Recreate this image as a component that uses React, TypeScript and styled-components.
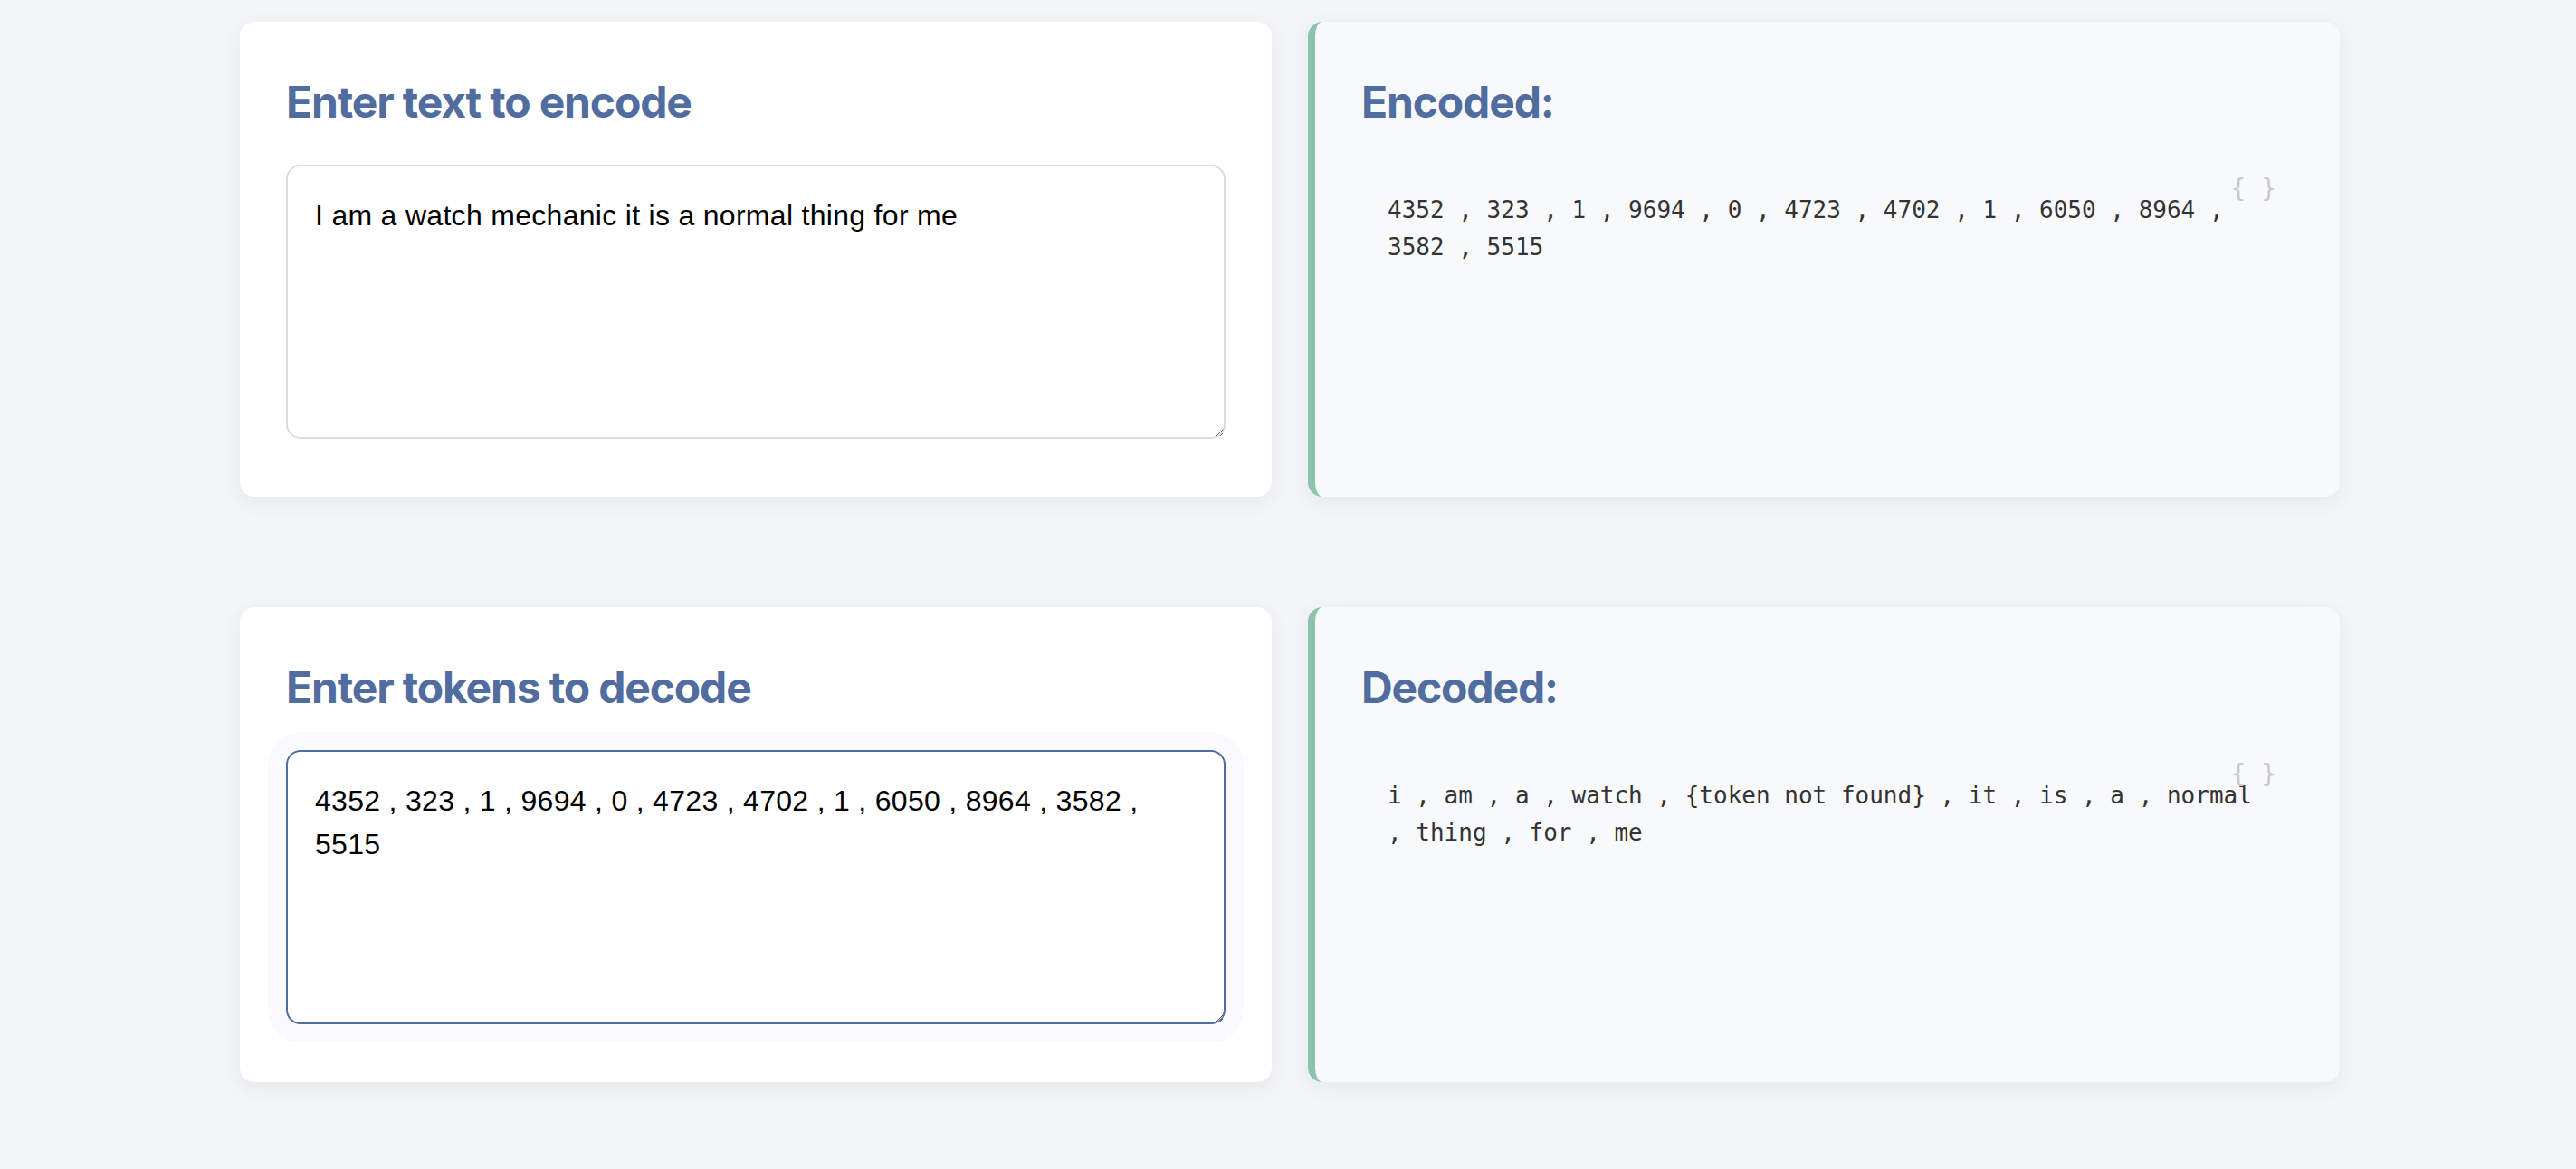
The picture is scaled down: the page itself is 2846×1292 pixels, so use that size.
import React, { useState } from "react";
import styled, { createGlobalStyle } from "styled-components";

const GlobalStyle = createGlobalStyle`
  html, body {
    margin: 0;
    padding: 0;
    background: #f4f5f8;
  }
  body {
    font-family: Inter, "Liberation Sans", Arial, sans-serif;
  }
  * { box-sizing: border-box; }
`;

const Page = styled.main`
  min-height: 1292px;
  padding: 24px 0 40px 4px;
`;

const Grid = styled.div`
  width: 2320px;
  margin: 0 auto;
  display: grid;
  grid-template-columns: 1140px 1140px;
  column-gap: 40px;
  row-gap: 122px;
`;

const Card = styled.section<{ $output?: boolean }>`
  position: relative;
  height: 525px;
  padding: 60px 51px 0 51px;
  border-radius: 16px;
  background: ${(p) => (p.$output ? "#f8f9fb" : "#ffffff")};
  border-left: ${(p) => (p.$output ? "8px solid #8bc4ab" : "none")};
  box-shadow: 0 6px 22px rgba(30, 40, 70, 0.07);
  display: flex;
  flex-direction: column;
`;

const Heading = styled.h2`
  margin: 0 0 40px;
  font-family: Inter, "Liberation Sans", sans-serif;
  font-weight: 700;
  font-size: 48px;
  line-height: 1.2;
  letter-spacing: -0.024em;
  color: #516c9f;
`;

const TextArea = styled.textarea<{ $focused?: boolean }>`
  display: block;
  width: 100%;
  height: 303px;
  padding: 30px;
  margin: 0;
  font-family: "Liberation Sans", Arial, sans-serif;
  font-size: 32px;
  line-height: 1.5;
  letter-spacing: 0.3px;
  color: #000;
  background: #fff;
  border: 2px solid ${(p) => (p.$focused ? "#516c9f" : "#dcdcdc")};
  border-radius: 16px;
  outline: none;
  resize: vertical;
  box-shadow: ${(p) => (p.$focused ? "0 0 0 20px rgba(81, 108, 159, 0.03)" : "none")};
`;

const Output = styled.pre`
  position: relative;
  margin: 0;
  padding: 30px 29px;
  min-height: 303px;
  font-family: "DejaVu Sans Mono", "Liberation Mono", monospace;
  font-size: 26px;
  line-height: 41px;
  color: #333;
  white-space: pre-wrap;
  word-break: normal;
  overflow-wrap: anywhere;
`;

const Badge = styled.span`
  position: absolute;
  top: 13px;
  right: 19px;
  font-family: "DejaVu Sans Mono", monospace;
  font-size: 28px;
  line-height: 28px;
  color: #c9c9c9;
  user-select: none;
`;

const tokens = "4352 , 323 , 1 , 9694 , 0 , 4723 , 4702 , 1 , 6050 , 8964 , 3582 , 5515";
const decoded = "i , am , a , watch , {token not found} , it , is , a , normal , thing , for , me";

export default function App() {
  const [text, setText] = useState("I am a watch mechanic it is a normal thing for me");
  const [tok, setTok] = useState(tokens);
  return (
    <>
      <GlobalStyle />
      <Page>
        <Grid>
          <Card>
            <Heading>Enter text to encode</Heading>
            <TextArea value={text} onChange={(e) => setText(e.target.value)} />
          </Card>
          <Card $output>
            <Heading>Encoded:</Heading>
            <Output>
              <Badge>{"{ }"}</Badge>
              {tokens}
            </Output>
          </Card>
          <Card>
            <Heading>Enter tokens to decode</Heading>
            <TextArea $focused value={tok} onChange={(e) => setTok(e.target.value)} />
          </Card>
          <Card $output>
            <Heading>Decoded:</Heading>
            <Output>
              <Badge>{"{ }"}</Badge>
              {decoded}
            </Output>
          </Card>
        </Grid>
      </Page>
    </>
  );
}
